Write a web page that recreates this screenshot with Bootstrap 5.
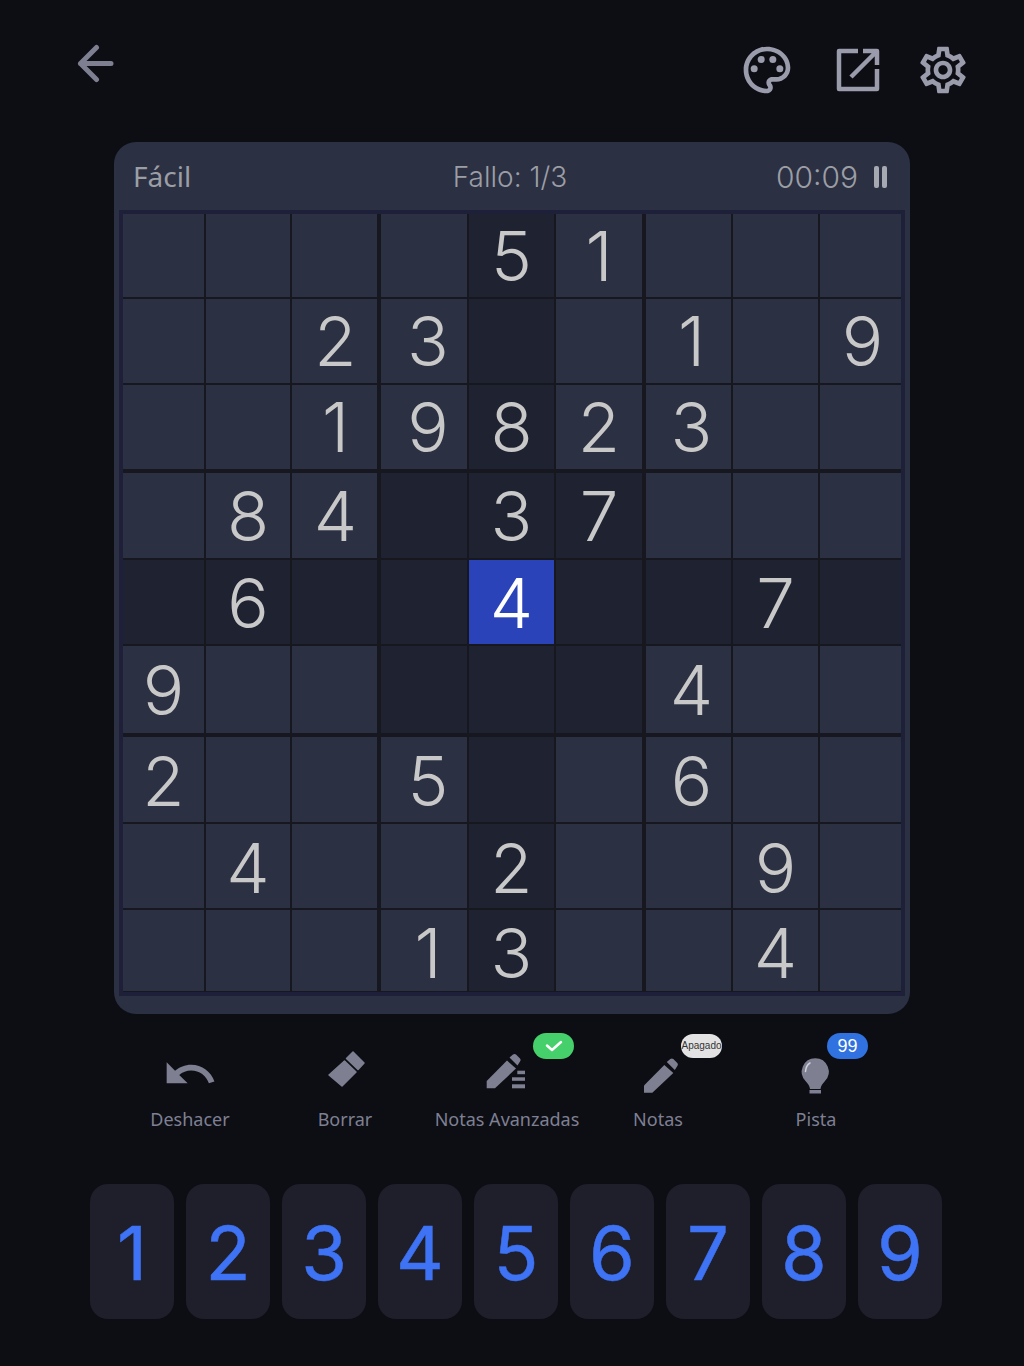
<!DOCTYPE html>
<html lang="es">
<head>
  <meta charset="UTF-8">
  <title>Sudoku</title>
  <link href="https://cdn.jsdelivr.net/npm/bootstrap@5.3.0/dist/css/bootstrap.min.css" rel="stylesheet">
  <style>
    body { background: #0d0d14; font-family: "Noto Sans", sans-serif; width: 1024px; height: 1366px; overflow: hidden; }
    .top-bar { height: 142px; padding: 42px 53px 0 76px; }
    .top-bar .back-icon { margin-top: 2px; }
    .top-bar .ext-icon { margin-left: 35px; }
    .top-bar .gear-icon { margin-left: 29px; }

    .board { width: 796px; height: 872px; margin-left: 114px; background: #2b3042; border-radius: 22px; padding: 0 5px; }
    .board-head { height: 68px; padding: 0 18px 0 14px; font-size: 28px; color: #9c9ea6; }
    .board-head > div { flex: 1 1 0; }
    .head-thin { font-family: "Inter", sans-serif; font-weight: 300; padding-top: 2px; }
    .head-time { font-size: 30px; }
    .pause-bar { width: 5px; height: 22px; background: #a7a9b2; border-radius: 2px; }

    .sudoku-grid { display: grid; width: 786px; height: 786px; border: 4px solid #1d2038; background: #17181f;
      grid-template-columns: 81px 84px 87px 86px 85px 88px 85px 85px 81px;
      grid-template-rows: 83px 84px 86px 85px 84px 89px 85px 84px 81px;
      gap: 2px; }
    .sudoku-cell { background: #2b3042; color: #c8c8c8; font-family: "Inter", sans-serif; font-weight: 300; font-size: 69px; line-height: 1; }
    .sudoku-cell.hl { background: #1f2230; }
    .sudoku-cell.sel { background: #2a43b9; color: #fff; }
    .sudoku-cell.box-r { margin-right: 2px; }
    .sudoku-cell.box-b { margin-bottom: 2px; }

    .tool-row { display: grid; grid-template-columns: 156px 154px 170px 132px 184px; margin: 32px 0 0 112px; width: 796px; }
    .tool-item { color: #7e8092; font-size: 18px; line-height: 24px; }
    .tool-item svg { display: block; fill: #7e8092; }
    .tool-label { margin-top: 5px; white-space: nowrap; }
    .tool-badge { position: absolute; height: 26px; border-radius: 13px; width: 41px; top: -13px; }
    .badge-on { left: 111px; background: #46d06c; }
    .badge-off { left: 89px; top: -12px; height: 24px; background: #e3e3e3; color: #333; font-size: 10px; font-family: "Liberation Sans", sans-serif; }
    .badge-count { left: 103px; background: #2f72e0; color: #fff; font-size: 18px; font-family: "Liberation Sans", sans-serif; }

    .num-pad { gap: 12px; margin: 53px 0 0 90px; }
    .num-key { width: 84px; height: 135px; padding: 3px 0 0; border: 0; border-radius: 18px; background: #1e1f2b; color: #3f73f5; font-family: "Inter", sans-serif; font-size: 74px; line-height: 1; -webkit-text-stroke: .5px #3f73f5; }
  </style>
</head>
<body>
  <!-- Top icons -->
  <div class="top-bar d-flex align-items-start">
    <svg class="back-icon" width="40" height="40" viewBox="0 0 40 40" fill="none" stroke="#7e8092" stroke-width="5" stroke-linecap="round" stroke-linejoin="round"><path d="M35 19.500H4.500M20.500 3.500L4.500 19.500L20.500 35.500"/></svg>
    <div class="ms-auto"></div>
    <svg width="56" height="56" viewBox="0 0 24 24" fill="#9a9cab"><path d="M12 22C6.490 22 2 17.510 2 12S6.490 2 12 2s10 4.040 10 9c0 3.310-2.690 6-6 6h-1.770c-.28 0-.5.220-.5.500 0 .120.050.230.130.330.410.470.640 1.060.640 1.670 0 1.380-1.120 2.500-2.500 2.500zm0-18c-4.410 0-8 3.590-8 8s3.590 8 8 8c.280 0 .5-.220.5-.5 0-.160-.080-.280-.140-.350-.410-.460-.630-1.050-.630-1.650 0-1.380 1.120-2.500 2.500-2.500H16c2.210 0 4-1.790 4-4 0-3.860-3.590-7-8-7z"/><circle cx="6.500" cy="11.500" r="1.500"/><circle cx="9.500" cy="7.500" r="1.500"/><circle cx="14.500" cy="7.500" r="1.500"/><circle cx="17.500" cy="11.500" r="1.500"/></svg>
    <svg class="ext-icon" width="56" height="56" viewBox="0 0 56 56" fill="none" stroke="#9a9cab" stroke-width="4.500" stroke-linejoin="round"><path d="M28 9H9v38h38V27"/><path d="M33 9H47V23M46 10L21 35"/></svg>
    <svg class="gear-icon" width="56" height="56" viewBox="0 0 24 24" fill="#9a9cab"><path d="M19.430 12.980c.040-.320.070-.640.070-.980 0-.340-.030-.660-.070-.980l2.110-1.650c.190-.150.240-.420.120-.640l-2-3.460c-.090-.160-.260-.250-.440-.250-.060 0-.120.010-.170.030l-2.490 1c-.520-.4-1.080-.730-1.690-.980l-.380-2.650C14.460 2.180 14.250 2 14 2h-4c-.250 0-.460.180-.490.420l-.380 2.650c-.610.250-1.170.590-1.690.980l-2.490-1c-.060-.020-.120-.030-.180-.030-.170 0-.340.090-.430.250l-2 3.460c-.130.220-.070.490.12.640l2.110 1.650c-.040.320-.070.650-.070.980 0 .330.030.660.070.980l-2.110 1.650c-.190.150-.240.420-.12.640l2 3.460c.090.160.260.250.440.250.060 0 .120-.010.170-.030l2.490-1c.520.4 1.080.730 1.690.980l.380 2.650c.030.240.240.420.490.420h4c.250 0 .460-.180.490-.42l.380-2.650c.610-.250 1.170-.590 1.690-.980l2.490 1c.060.020.120.030.180.030.170 0 .340-.090.430-.250l2-3.460c.120-.220.070-.490-.120-.64l-2.110-1.650zm-1.980-1.710c.040.310.050.520.050.730 0 .210-.020.430-.05.730l-.14 1.130.89.7 1.080.84-.7 1.21-1.270-.510-1.040-.42-.9.680c-.43.32-.84.56-1.250.73l-1.060.43-.16 1.130-.2 1.350h-1.400l-.19-1.350-.16-1.130-1.060-.43c-.43-.18-.83-.41-1.230-.71l-.91-.7-1.060.43-1.270.51-.7-1.210 1.080-.84.89-.7-.14-1.130c-.03-.31-.05-.54-.05-.74s.02-.43.05-.73l.14-1.130-.89-.7-1.080-.84.7-1.21 1.27.51 1.040.42.9-.68c.43-.32.84-.56 1.250-.73l1.060-.43.160-1.130.2-1.350h1.390l.19 1.350.16 1.130 1.060.43c.43.18.83.41 1.230.71l.91.7 1.060-.43 1.270-.51.7 1.210-1.070.85-.89.7.14 1.130zM12 8c-2.210 0-4 1.790-4 4s1.790 4 4 4 4-1.790 4-4-1.790-4-4-4zm0 6c-1.100 0-2-.9-2-2s.9-2 2-2 2 .9 2 2-.9 2-2 2z"/></svg>
  </div>

  <!-- Board -->
  <div class="board">
    <div class="board-head d-flex align-items-center">
      <div>Fácil</div>
      <div class="text-center head-thin">Fallo: 1/3</div>
      <div class="d-flex align-items-center justify-content-end head-thin">
        <span class="head-time">00:09</span>
        <span class="pause-bar ms-3"></span>
        <span class="pause-bar" style="margin-left: 3px"></span>
      </div>
    </div>
    <div class="sudoku-grid" id="grid"></div>
  </div>

  <!-- Tools -->
  <div class="tool-row">
    <div class="tool-item d-flex flex-column align-items-center">
      <svg width="56" height="56" viewBox="0 0 24 24"><path d="M12.500 8c-2.650 0-5.050.990-6.900 2.600L2 7v9h9l-3.620-3.620c1.390-1.160 3.160-1.880 5.120-1.880 3.540 0 6.550 2.310 7.600 5.500l2.370-.78C21.080 11.030 17.150 8 12.500 8z"/></svg>
      <div class="tool-label">Deshacer</div>
    </div>
    <div class="tool-item d-flex flex-column align-items-center">
      <svg width="56" height="56" viewBox="0 0 56 56" stroke="#7e8092" stroke-width="1.500" stroke-linejoin="round"><path d="M36 6L47 17L41 23.500L29.500 12.500Z"/><path d="M27.500 15L39 26L25 40L12 29Z"/></svg>
      <div class="tool-label">Borrar</div>
    </div>
    <div class="tool-item d-flex flex-column align-items-center position-relative">
      <svg width="56" height="56" viewBox="0 0 56 56"><g transform="translate(7 7)"><path d="M.7 35.300V28L21 7.500L30 15.500L9 35.300Z"/><path d="M23.500 4.500L27 1.500C28 .8 29 .8 30 1.500L34 5.500C34.800 6.500 34.800 7.500 34 8.500L31.500 12.500Z"/><rect x="31.300" y="17.700" width="7.700" height="3.500"/><rect x="26" y="24.300" width="13" height="3.500"/><rect x="26" y="31.300" width="13" height="4"/></g></svg>
      <div class="tool-label">Notas Avanzadas</div>
      <span class="tool-badge badge-on d-flex align-items-center justify-content-center">
        <svg width="20" height="14" viewBox="0 0 20 14" style="fill:none" stroke="#fff" stroke-width="2.500" stroke-linecap="round" stroke-linejoin="round"><path d="M3 6.500L8 11L17 3"/></svg>
      </span>
    </div>
    <div class="tool-item d-flex flex-column align-items-center position-relative">
      <svg width="56" height="56" viewBox="0 0 56 56"><g transform="translate(13.300 11.400)"><path d="M.7 35.300V28L21 7.500L30 15.500L9 35.300Z"/><path d="M23.500 4.500L27 1.500C28 .8 29 .8 30 1.500L34 5.500C34.800 6.500 34.800 7.500 34 8.500L31.500 12.500Z"/></g></svg>
      <div class="tool-label">Notas</div>
      <span class="tool-badge badge-off d-flex align-items-center justify-content-center">Apagado</span>
    </div>
    <div class="tool-item d-flex flex-column align-items-center position-relative">
      <svg width="56" height="56" viewBox="0 0 56 56"><path d="M27.300 12.200a13.500 13.500 0 0 1 9.500 23c-2.500 2.600-4 5-4.300 7.800H22c-.3-2.800-1.800-5.200-4.300-7.800a13.500 13.500 0 0 1 9.600-23Z"/><rect x="21.500" y="44" width="11.500" height="3.500"/><path d="M17.500 25.500C17.800 21.500 19.500 18.500 22 17" fill="none" stroke="#d0d0d8" stroke-width="1.500" stroke-linecap="round"/></svg>
      <div class="tool-label">Pista</div>
      <span class="tool-badge badge-count d-flex align-items-center justify-content-center">99</span>
    </div>
  </div>

  <!-- Number keys -->
  <div class="num-pad d-flex" id="pad"></div>

  <script>
    const rows = [
      '....51...',
      '..23..1.9',
      '..19823..',
      '.84.37...',
      '.6..4..7.',
      '9.....4..',
      '2..5..6..',
      '.4..2..9.',
      '...13..4.'
    ];
    // digits don't sit dead centre in the cells of the original
    const colShift = [0, 0, 1, 4, 0, 0, 3, 0, 2];
    const rowShift = [1, 0, 0, 1, 1, 1, 2, 2, 3];
    const grid = document.getElementById('grid');
    rows.forEach((row, r) => {
      [...row].forEach((val, c) => {
        const cell = document.createElement('div');
        cell.className = 'sudoku-cell d-flex align-items-center justify-content-center';
        const inBox = r >= 3 && r <= 5 && c >= 3 && c <= 5;
        if (r === 4 || c === 4 || inBox) cell.classList.add('hl');
        if (r === 4 && c === 4) cell.classList.add('sel');
        if (c === 2 || c === 5) cell.classList.add('box-r');
        if (r === 2 || r === 5) cell.classList.add('box-b');
        cell.style.paddingLeft = colShift[c] * 2 + 'px';
        cell.style.paddingTop = rowShift[r] * 2 + 'px';
        cell.textContent = val === '.' ? '' : val;
        grid.appendChild(cell);
      });
    });

    const pad = document.getElementById('pad');
    for (let n = 1; n <= 9; n++) {
      const key = document.createElement('button');
      key.className = 'btn num-key d-flex align-items-center justify-content-center';
      key.textContent = n;
      pad.appendChild(key);
    }
  </script>
</body>
</html>
